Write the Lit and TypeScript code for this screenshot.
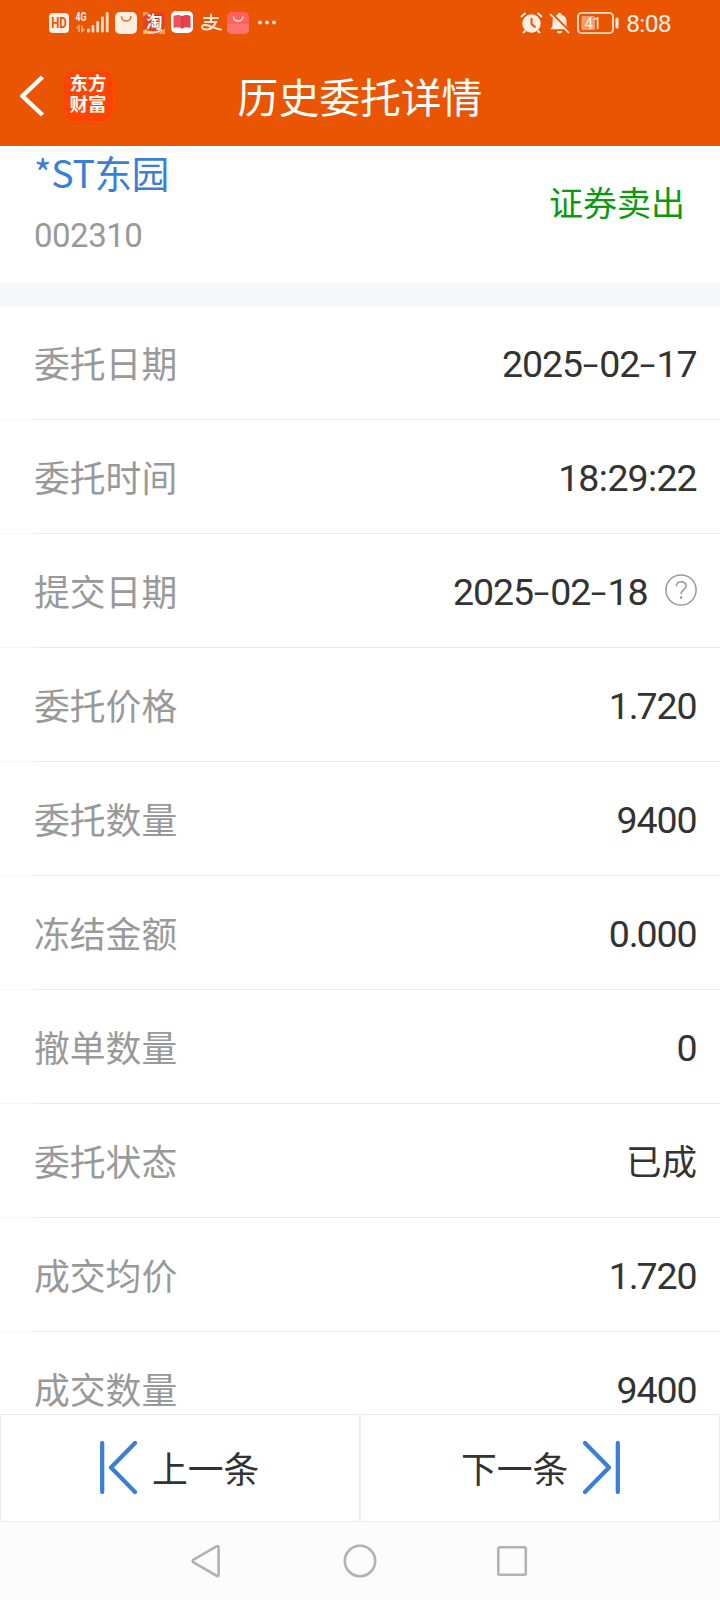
import { LitElement, html, css } from "lit";
import { customElement, property } from "lit/decorators.js";

interface Entry {
  label: string;
  value: string;
  help?: boolean;
}

const ENTRIES: Entry[] = [
  { label: "委托日期", value: "2025-02-17" },
  { label: "委托时间", value: "18:29:22" },
  { label: "提交日期", value: "2025-02-18", help: true },
  { label: "委托价格", value: "1.720" },
  { label: "委托数量", value: "9400" },
  { label: "冻结金额", value: "0.000" },
  { label: "撤单数量", value: "0" },
  { label: "委托状态", value: "已成" },
  { label: "成交均价", value: "1.720" },
  { label: "成交数量", value: "9400" },
];

@customElement("status-bar")
class StatusBar extends LitElement {
  static styles = css`
    :host {
      display: flex;
      justify-content: space-between;
      height: 46px;
      padding: 0 49px 0 49px;
      color: #ffeee2;
      font-family: Roboto, "Noto Sans CJK SC", sans-serif;
    }
    svg { display: block; }
    .side { display: flex; align-items: center; height: 46px; }
    .time { font-size: 24.5px; line-height: 46px; margin-left: 7px; padding-top: 1px; letter-spacing: -0.6px; }
  `;

  render() {
    return html`
      <div class="side">
        <svg width="228" height="46" viewBox="49 0 228 46">
          <rect x="49" y="13" width="20" height="20" rx="4" fill="#ffeee2" />
          <text x="51.2" y="28" font-size="14" font-weight="700" fill="#ea5504" textLength="15.6" lengthAdjust="spacingAndGlyphs">HD</text>
          <text x="75.5" y="21" font-size="12.500" font-weight="700" fill="#ffeee2" textLength="11" lengthAdjust="spacingAndGlyphs">4G</text>
          <g stroke="#f8a878" stroke-width="1.6" fill="none">
            <path d="M79 32v-6l-2.5 2.5M82 25.500v6l2.500-2.500" />
          </g>
          <g fill="#ffdcc6">
            <rect x="87" y="28.500" width="2.800" height="4" rx="1.200" />
            <rect x="91.500" y="25" width="2.800" height="7.500" rx="1.200" />
            <rect x="96.300" y="21" width="2.800" height="11.500" rx="1.200" />
            <rect x="101" y="16.500" width="2.800" height="16" rx="1.200" />
            <rect x="105.800" y="12" width="2.800" height="20.500" rx="1.200" />
          </g>
          <rect x="115" y="12" width="22" height="22" rx="5" fill="#ffeee2" />
          <path d="M121.500 16.500a4.700 4.500 0 0 0 9.400 0" fill="none" stroke="#ea6a28" stroke-width="1.500" stroke-linecap="round" />
          <rect x="143" y="12" width="22" height="22" fill="#e8431c" />
          <path d="M143 12h6l-6 5zM158 34h7v-6zM143 30l4-1 3 5h-7z" fill="#f6a14b" />
          <circle cx="145.500" cy="32" r="1.500" fill="#d9e04b" />
          <path d="M148 32q7 2 14-2.500" stroke="#ffe0cc" stroke-width="2.500" fill="none" />
          <text x="146" y="28" font-size="16.500" font-weight="700" fill="#fff" stroke="#a83218" stroke-width="1" paint-order="stroke">淘</text>
          <rect x="171" y="11" width="22" height="22" rx="5" fill="#fff" />
          <path d="M173.500 16q4.500-2 8.500 0v12.500q-4.500-2-8.500-.5z" fill="#f0505c" />
          <path d="M182 16q4.500-2 8.500 0v12q-4.500-1.500-8.500.5z" fill="#e8404f" />
          <path d="M182 16v12.500" stroke="#c52a40" stroke-width="0.800" />
          <g fill="none" stroke="#ffe6d5" stroke-width="2" stroke-linecap="round">
            <path d="M204 18h14M211 14.500v7M205 22h11q-3 7-9 7.500c-5 .5-7-3.500-3-4.500 5-1 10 4 17 4.500" />
          </g>
          <rect x="227" y="12" width="22" height="22" rx="5" fill="#ff625c" />
          <path d="M227 24h22v5a5 5 0 0 1-5 5h-12a5 5 0 0 1-5-5z" fill="#ff7470" />
          <path d="M233.500 17a4.700 4 0 0 0 9.400 0" fill="none" stroke="#ffe0d8" stroke-width="1.500" stroke-linecap="round" />
          <g fill="#ffe6d5">
            <circle cx="260" cy="22.500" r="1.900" />
            <circle cx="267" cy="22.500" r="1.900" />
            <circle cx="274" cy="22.500" r="1.900" />
          </g>
        </svg>
      </div>
      <div class="side">
        <svg width="99" height="46" viewBox="520 0 99 46">
          <circle cx="531.500" cy="23.500" r="9.200" fill="#ffeee2" />
          <path d="M531.500 18v6l4 3.500" fill="none" stroke="#ea5504" stroke-width="2" />
          <path d="M521 17l4.500-4M542 17l-4.500-4M525.500 30.500l-2.500 2.500M537.500 30.500l2.500 2.500" stroke="#ffeee2" stroke-width="2" />
          <path d="M559.500 12.800a2 2 0 0 1 2 2c3.500 1 5 3.500 5 7v4.500l2 3h-18l2-3v-4.500c0-3.500 1.500-6 5-7a2 2 0 0 1 2-2zM557 31h5a2.500 2.500 0 0 1-5 0z" fill="#ffeee2" />
          <path d="M551.500 13l19 19" stroke="#ea5504" stroke-width="2" />
          <path d="M550 14l19 19" stroke="#ffeee2" stroke-width="1.700" />
          <rect x="578" y="12.800" width="35" height="20.400" rx="4" fill="none" stroke="#ffdfca" stroke-width="1.800" />
          <rect x="581.500" y="16" width="13.500" height="14" rx="1.500" fill="#f89b6a" />
          <text x="584.500" y="28.700" font-size="17" fill="#fff5ec" textLength="17" lengthAdjust="spacingAndGlyphs">41</text>
          <rect x="615.500" y="17.500" width="3" height="11" rx="1.500" fill="#ffeee2" />
        </svg>
        <span class="time">8:08</span>
      </div>
    `;
  }
}

@customElement("detail-row")
class DetailRow extends LitElement {
  @property({ attribute: false }) entry!: Entry;

  static styles = css`
    :host {
      display: block;
      height: 114px;
      background: #fff;
      font-family: Roboto, "Noto Sans CJK SC", sans-serif;
    }
    .row {
      box-sizing: border-box;
      height: 114px;
      display: flex;
      align-items: center;
      justify-content: space-between;
      padding: 0 23px 0 34px;
      background:
        linear-gradient(#ebebeb, #ebebeb) 34px 113px / 686px 1px no-repeat,
        linear-gradient(#f7f7f7, #f7f7f7) 0 113px / 34px 1px no-repeat;
    }
    .label { font-family: "Noto Sans CJK SC", sans-serif; font-size: 35.8px; line-height: 50px; color: #999; padding-bottom: 2px; }
    .value { display: flex; align-items: center; color: #333; font-size: 37.5px; line-height: 50px; }
    .number { letter-spacing: -1.1px; white-space: nowrap; padding: 2px 0.5px 0 0; }
    .word { font-family: "Noto Sans CJK SC", sans-serif; font-size: 35.5px; padding-bottom: 3px; }
    .dash { display: inline-block; width: 17.3px; text-align: center; letter-spacing: 0; transform: scale(1.5, 0.9); }
    .colon { margin: 0 0.6px; }
    .point { letter-spacing: -2px; }
    .help { display: block; margin: -3px 0 0 17px; }
  `;

  private glyphs(text: string) {
    return [...text].map((c) =>
      c === "-"
        ? html`<span class="dash">-</span>`
        : c === "."
          ? html`<span class="point">.</span>`
          : c === ":"
            ? html`<span class="colon">:</span>`
            : c
    );
  }

  render() {
    const { label, value, help } = this.entry;
    const numeric = /^[\d.:-]+$/.test(value);
    return html`
      <div class="row">
        <span class="label">${label}</span>
        <div class="value">
          <span class=${numeric ? "number" : "word"}>${this.glyphs(value)}</span>
          ${help
            ? html`<svg class="help" width="32" height="32" viewBox="0 0 32 32">
                <circle cx="16" cy="16" r="15.100" fill="none" stroke="#999" stroke-width="1.500" />
                <path d="M11.300 12.300c0-6 9.800-6 9.800-.4 0 3.600-5 4-5 8.200" fill="none" stroke="#999" stroke-width="1.600" />
                <circle cx="16.100" cy="23.600" r="1.300" fill="#999" />
              </svg>`
            : ""}
        </div>
      </div>
    `;
  }
}

@customElement("app-root")
class AppRoot extends LitElement {
  static styles = css`
    :host {
      display: flex;
      flex-direction: column;
      width: 720px;
      height: 1600px;
      overflow: hidden;
      background: #fff;
      font-family: Roboto, "Noto Sans CJK SC", sans-serif;
    }
    svg { display: block; }
    .header { flex: none; height: 146px; background: #ea5504; }
    .title-bar {
      display: grid;
      grid-template-columns: 120px 1fr 120px;
      align-items: center;
      height: 100px;
    }
    .nav { display: flex; align-items: center; padding-left: 20px; gap: 19px; padding-bottom: 1px; }
    .logo {
      box-sizing: border-box;
      width: 50px;
      height: 50px;
      border-radius: 11px;
      background: #ff4400;
      color: #fff;
      font: 700 18.5px/21.5px "Noto Sans CJK SC", sans-serif;
      text-align: center;
      padding-top: 1px;
    }
    .logo-line { display: block; }
    .title { font: 400 40.8px/60px "Noto Sans CJK SC", sans-serif; color: #fff; text-align: center; padding-bottom: 1px; }
    .security {
      flex: none;
      display: flex;
      justify-content: space-between;
      height: 137px;
      border-bottom: 23px solid #f6f7fa;
      padding: 0 35px 0 34px;
    }
    .name { font: 400 37.5px/52px "Noto Sans CJK SC", sans-serif; letter-spacing: -0.3px; color: #3a7fd5; white-space: nowrap; }
    .code { font-size: 33px; line-height: 40px; letter-spacing: -0.5px; color: #999; padding-top: 18px; }
    .side { font: 400 34px/48px "Noto Sans CJK SC", sans-serif; color: #0a9a10; padding-top: 32px; }
    .list { flex: 1; min-height: 0; overflow: hidden; }
    .pager { flex: none; box-sizing: border-box; height: 108px; display: grid; grid-template-columns: 360px 360px; border: 1px solid #ebebeb; border-width: 1px 0; background: #fff; }
    .step {
      box-sizing: border-box;
      display: flex;
      align-items: center;
      gap: 15px;
      font: 400 35.8px/50px "Noto Sans CJK SC", sans-serif;
      color: #333;
      border-right: 1px solid #ebebeb;
      padding-bottom: 2px;
    }
    .prev { padding-left: 99px; border-left: 1px solid #ebebeb; }
    .next { padding-left: 100px; border-left: 1px solid #f2f2f2; }
    .system { flex: none; height: 78px; display: flex; justify-content: center; align-items: center; background: #fcfcfc; }
  `;

  render() {
    return html`
      <header class="header">
        <status-bar></status-bar>
        <div class="title-bar">
          <div class="nav">
            <svg width="24" height="42" viewBox="0 0 24 42">
              <path d="M22.500 2L2.500 21l20 19" fill="none" stroke="#fff" stroke-width="4.400" />
            </svg>
            <div class="logo"><span class="logo-line">东方</span><span class="logo-line">财富</span></div>
          </div>
          <div class="title">历史委托详情</div>
        </div>
      </header>
      <section class="security">
        <div>
          <div class="name">*ST东园</div>
          <div class="code">002310</div>
        </div>
        <div class="side">证券卖出</div>
      </section>
      <main class="list">${ENTRIES.map((e) => html`<detail-row .entry=${e}></detail-row>`)}</main>
      <div class="pager">
        <div class="step prev">
          <svg width="37" height="53" viewBox="0 0 37 53">
            <path d="M2.200 2v49M35 2L11 26.500 35 51" fill="none" stroke="#3a7fd5" stroke-width="4.200" stroke-linecap="round" stroke-linejoin="round" />
          </svg>
          <span>上一条</span>
        </div>
        <div class="step next">
          <span>下一条</span>
          <svg width="37" height="53" viewBox="0 0 37 53">
            <path d="M34.800 2v49M2 2l24 24.500L2 51" fill="none" stroke="#3a7fd5" stroke-width="4.200" stroke-linecap="round" stroke-linejoin="round" />
          </svg>
        </div>
      </div>
      <nav class="system">
        <svg width="340" height="40" viewBox="190 1541 340 40" fill="none" stroke="#b2b2b2" stroke-width="2.600" stroke-linejoin="round">
          <path d="M217 1546.200L193.500 1559.600q-1.600 1.400 0 2.800L217 1576q1.600.4 1.600-1.200v-27.400q0-1.600-1.600-1.200z" />
          <circle cx="360" cy="1561" r="15.200" />
          <rect x="498.300" y="1547.300" width="27.500" height="27.500" rx="1.500" />
        </svg>
      </nav>
    `;
  }
}
